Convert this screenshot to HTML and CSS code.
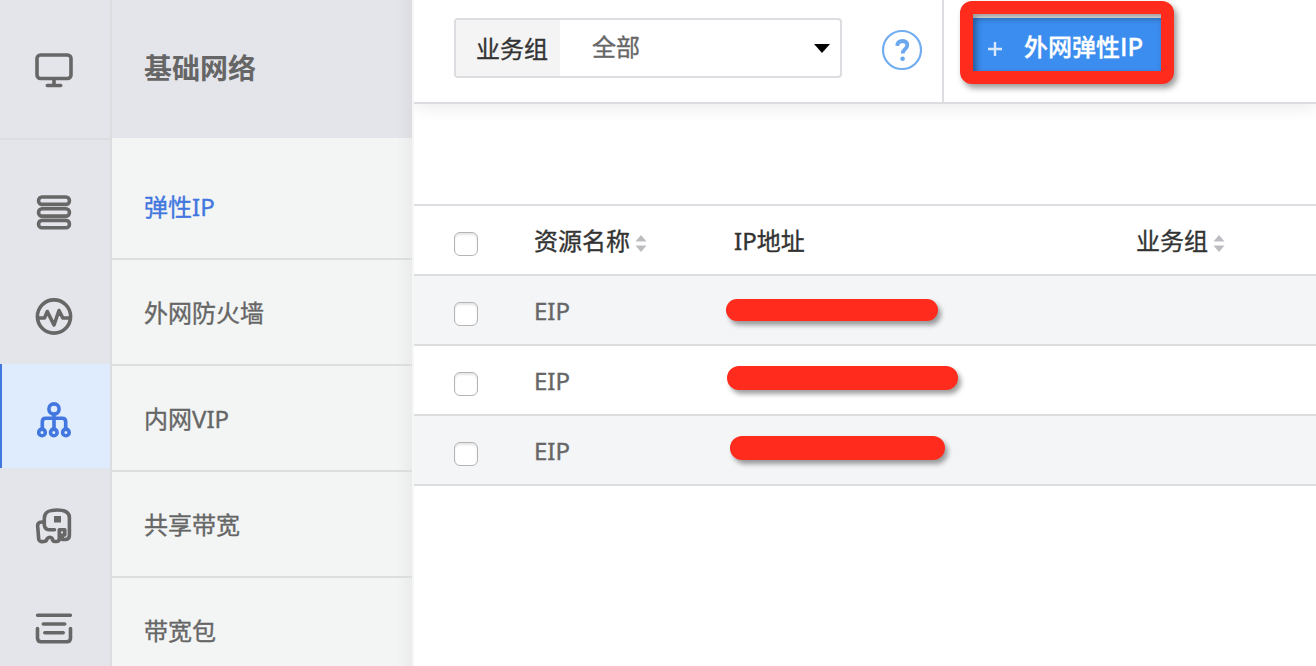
FILE: index.html
```html
<!DOCTYPE html>
<html lang="zh-CN">
<head>
<meta charset="utf-8">
<title>基础网络</title>
<link rel="stylesheet" href="styles.css">
</head>
<body>
<div class="app">
  <nav class="rail">
    <a class="rail-top"><svg class="icon" viewBox="0 0 44 44"><rect x="5" y="7" width="34" height="23.5" rx="3.5"/><path d="M22 31v6M15.3 37.5h13.4"/></svg></a>
    <div class="rail-list">
      <a class="rail-item"><svg class="icon" viewBox="0 0 44 44"><rect x="6.6" y="7" width="30.8" height="7.4" rx="3.4"/><rect x="6.600" y="18.700" width="30.800" height="7.400" rx="3.400"/><rect x="6.600" y="30.400" width="30.800" height="7.400" rx="3.400"/></svg></a>
      <a class="rail-item"><svg class="icon" viewBox="0 0 44 44"><circle cx="22" cy="22.500" r="16.600"/><path d="M6 24h6.500l2.800-6.500L22 31l5-14.500 3.800 7.500H38"/></svg></a>
      <a class="rail-item active"><svg class="icon" viewBox="0 0 44 44"><circle cx="22" cy="11" r="5.100"/><circle cx="10" cy="34.400" r="3.300"/><circle cx="21.800" cy="34.400" r="3.300"/><circle cx="33.900" cy="34.400" r="3.300"/><path d="M22 16v15M10.300 31v-7.200q0-3.500 3.500-3.500h16.400q3.500 0 3.500 3.500V31"/></svg></a>
      <a class="rail-item"><svg class="icon" viewBox="0 0 44 44"><path d="M22.500 27.800h-5.500q-4.200-.5-4.700-4.800v-6.500C12.300 10 16.500 8 25 8s12.400 2.200 12.400 7.500v17.500q0 4.500-4.500 4.500h-2.600v-4.500h2.500v-5.200H27.300v8.700q0 3-2.800 3h-2q-2-.5-2.300-3-2.200-2.600-5 0-.5 3-3.700 3-4.500.8-4.800-2.500L5.600 23.500q0-3 4-3.500l2.700-.5"/><rect class="solid" x="22" y="14" width="7" height="6.500"/></svg></a>
      <a class="rail-item"><svg class="icon" viewBox="0 0 44 44"><path d="M5.600 9.300h32.800M11.300 18h21.400M12.800 26.700h18.400M5.500 22.500v9.500q0 3.800 3.800 3.800h25.400q3.800 0 3.800-3.800v-9.500"/></svg></a>
    </div>
  </nav>
  <aside class="subnav">
    <h1 class="subnav-title">基础网络</h1>
    <a class="subnav-item current">弹性IP</a>
    <a class="subnav-item">外网防火墙</a>
    <a class="subnav-item">内网VIP</a>
    <a class="subnav-item">共享带宽</a>
    <a class="subnav-item">带宽包</a>
  </aside>
  <main class="main">
    <header class="toolbar">
      <div class="filters">
        <div class="select"><span class="select-label">业务组</span><span class="select-value">全部</span><svg class="caret" viewBox="0 0 16 9"><path d="M0 0h16L8 9z"/></svg></div>
        <svg class="help" viewBox="0 0 42 42"><circle cx="21" cy="21" r="19"/><path class="mark" d="M16.300 16.800q.3-4.800 5.200-4.800 4.800.2 4.800 4.300c0 3.700-4.600 4.200-4.600 8.200"/><circle class="dot" cx="21.600" cy="29.700" r="2.300"/></svg>
      </div>
      <div class="actions">
        <button class="create"><svg class="plus" viewBox="0 0 14 14"><path d="M7 0v14M0 7h14"/></svg><span>外网弹性IP</span></button>
        <span class="highlight"></span>
      </div>
    </header>
    <section class="table">
      <div class="row head"><span><i class="check"></i></span><span class="cell">资源名称<svg class="sort" viewBox="0 0 12 17"><path d="M6 0l5.500 6.500H.5zM6 17l5.500-6.500H.5z"/></svg></span><span class="cell">IP地址</span><span class="cell">业务组<svg class="sort" viewBox="0 0 12 17"><path d="M6 0l5.500 6.500H.5zM6 17l5.500-6.500H.5z"/></svg></span></div>
      <div class="row shaded"><span><i class="check"></i></span><span class="cell">EIP</span><span><i class="redact redact-a"></i></span></div>
      <div class="row"><span><i class="check"></i></span><span class="cell">EIP</span><span><i class="redact redact-b"></i></span></div>
      <div class="row shaded"><span><i class="check"></i></span><span class="cell">EIP</span><span><i class="redact redact-c"></i></span></div>
    </section>
  </main>
</div>
</body>
</html>
```
FILE: styles.css
```css
* { box-sizing: border-box; }
body { margin: 0; background: #fff; font: 24px/36px "Noto Sans", "Noto Sans CJK SC", sans-serif; color: #666; -webkit-text-stroke: .35px currentColor; }
.app { display: flex; height: 666px; overflow: hidden; }

.rail { width: 112px; flex: none; background: #e4e5ea; border-right: 2px solid #dcdddf; }
.rail-top { display: flex; justify-content: center; align-items: center; height: 140px; padding: 2px 2px 0 0; border-bottom: 2px solid #dcdddf; }
.rail-list { padding-top: 16px; }
.rail-item { display: flex; justify-content: center; align-items: center; height: 104px; padding: 8px 2px 0 0; }
.icon { width: 44px; height: 44px; fill: none; stroke: #676767; stroke-width: 3.6; stroke-linecap: round; stroke-linejoin: round; }
.icon .solid { fill: #676767; stroke: none; }
.active { background: #deecfd; box-shadow: inset 2px 0 #4277df; }
.active .icon { stroke: #4277df; }

.subnav { width: 300px; flex: none; background: linear-gradient(90deg, transparent 284px, rgba(0, 0, 0, .035)) #f3f5f4; }
.subnav-title { height: 138px; margin: 0; padding: 50px 0 0 32px; font-size: 28px; line-height: 36px; font-weight: 700; background: linear-gradient(90deg, transparent 284px, rgba(0, 0, 0, .035)) #e4e5ea; -webkit-text-stroke: 0; }
.subnav-item { display: flex; align-items: center; height: 106px; padding: 2px 0 0 32px; border-bottom: 2px solid #dcdedd; }
.current { height: 122px; padding-top: 18px; color: #4277df; }

.main { flex: 1; border-left: 2px solid #f6f6f7; }
.toolbar { display: flex; height: 104px; border-bottom: 2px solid #dcdce1; box-shadow: 0 4px 16px rgba(0, 0, 0, .08); clip-path: inset(0 0 -30px 0); }
.filters { display: flex; width: 530px; padding: 18px 0 0 40px; border-right: 2px solid #dcdce1; }
.select { display: flex; align-items: center; width: 388px; height: 60px; border: 2px solid #dcdce1; border-radius: 4px; }
.select-label { width: 104px; height: 56px; padding: 11px 0 0 20px; background: #f4f4f4; color: #333; }
.select-value { flex: 1; padding: 0 0 2px 32px; }
.caret { width: 16px; height: 9px; margin-right: 10px; }
.help { width: 42px; height: 42px; margin: 11px 0 0 39px; fill: none; stroke: #72adf2; stroke-width: 2.2; }
.help .mark { stroke: #6aa7ee; stroke-width: 3.8; }
.help .dot { fill: #6aa7ee; stroke: none; }
.actions { position: relative; padding: 18px 0 0 25px; }
.create { display: flex; align-items: center; width: 196px; height: 60px; padding: 0 0 4px 19px; gap: 22px; border: 0; background: #3b8def; color: #fff; font: 500 24px/36px "Noto Sans CJK SC", sans-serif; white-space: nowrap; -webkit-text-stroke: .3px #fff; }
.plus { width: 14px; height: 14px; flex: none; margin-top: 6px; stroke: #d8e8fc; stroke-width: 2.4; }
/* Callout frame drawn over the create button */
.highlight { position: absolute; left: 16px; top: 1px; width: 214px; height: 83px; border: 13px solid #ff2b1c; border-radius: 12px; filter: drop-shadow(3px 4px 3px rgba(0, 0, 0, .4)); }

.table { margin-top: 100px; border-top: 2px solid #dcdce1; }
.row { display: grid; grid-template-columns: 80px 200px 402px 1fr; height: 70px; padding-left: 40px; border-bottom: 2px solid #dcdddf; }
.row.shaded { background: #f4f5f7; }
.row.head { color: #333; }
.cell { padding-top: 17px; }
.check { display: block; width: 24px; height: 24px; margin-top: 26px; border: 1.5px solid #b4b4b4; border-radius: 6px; background: #fff; box-shadow: inset 0 2px 2px rgba(0, 0, 0, .1); }
.sort { width: 12px; height: 17px; margin-left: 5px; vertical-align: -2px; fill: #bdbdc1; }
.redact { display: block; background: #ff2b1c; border-radius: 12px; box-shadow: 3px 4px 5px rgba(0, 0, 0, .38); }
.redact-a { width: 212px; height: 22px; margin: 23px 0 0 -8px; }
.redact-b { width: 231px; height: 24px; margin: 20px 0 0 -7px; }
.redact-c { width: 215px; height: 24px; margin: 20px 0 0 -4px; }
```
